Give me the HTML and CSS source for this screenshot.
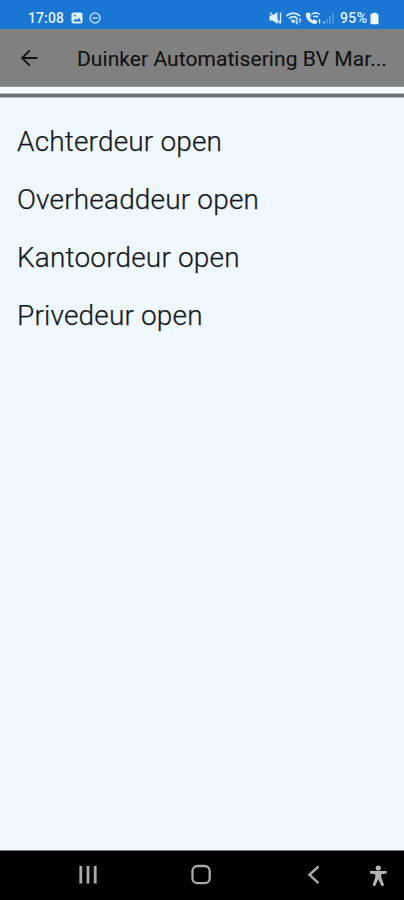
FILE: index.html
```html
<!DOCTYPE html>
<html lang="nl">
<head>
<meta charset="utf-8">
<title>Duinker Automatisering</title>
<link rel="stylesheet" href="styles.css">
</head>
<body>
<div class="phone">
  <div class="status">
    <span class="time">17:08</span>
    <svg class="pic" width="12" height="12" viewBox="0 0 12 12"><rect x=".5" y=".5" width="11" height="11" rx="2" fill="#e3f2fd"/><path d="M2 9.500l2.500-3 1.600 1.500L8 5.500l2.200 4z" fill="#1976d2"/><circle cx="4" cy="3.500" r="1" fill="#1976d2"/></svg>
    <svg class="dnd" width="12" height="12" viewBox="0 0 12 12" fill="none" stroke="#b9daf8" stroke-width="1.400"><circle cx="6" cy="6" r="5"/><path d="M3.200 6h5.600"/></svg>
    <span class="grow"></span>
    <svg class="icons" width="68" height="16" viewBox="0 0 68 16" fill="none" stroke="#d5eafc" stroke-width="1.400">
      <path d="M0.500 5.500h3L8.500 2v12l-5-3.500h-3z" fill="#e3f2fd" stroke="none"/>
      <path d="M1 2.500l10.500 11M11.500 2.500v11"/>
      <path d="M17.500 6c4-3.800 9.500-3.800 13.500 0M20 8.600c3-2.500 6-2.500 8.500 0" stroke-width="1.800"/>
      <path d="M21.500 10.500q2.500-2 5 0L24.300 13.500z" fill="#d5eafc" stroke="none"/>
      <path d="M28 9v4.500l-1.500-1.500M31 13V9l1.200 1.200" stroke-width="1.200"/>
      <path d="M37 3c-1 5 3.500 11 10 11l1.500-3-3.500-1.700-1.700 1.200-2.500-3L42 6l-1.500-3.500z" fill="#e3f2fd" stroke="none"/>
      <path d="M42.500 4.500c2.500-2 5.500-2 8 0M44.500 7c1.500-1 3-1 4.500 0" stroke-width="1.600"/>
      <path d="M50.500 9v4.500M55 13.500v-2" stroke-width="1.400"/>
      <path d="M58 13.500V9M61 13.500V6M64 13.500V3" stroke="#5ba0e4" stroke-width="1.400"/>
    </svg>
    <span class="percent">95%</span>
    <svg class="battery" width="9" height="13" viewBox="0 0 9 13"><path d="M2.500.8h4v1h1q1 0 1 1V11q0 1.200-1.200 1.200H1.700Q.5 12.200.5 11V2.800q0-1 1-1h1z" fill="#eef7ff"/></svg>
  </div>
  <header class="bar">
    <svg class="back" width="18" height="18" viewBox="0 0 18 18" fill="none" stroke="#111" stroke-width="1.800"><path d="M16.500 9H1.500M8.800 1.300L1.100 9l7.700 7.700"/></svg>
    <h1 class="title">Duinker Automatisering BV Mar...</h1>
  </header>
  <div class="divider"></div>
  <ul class="doors">
    <li class="door">Achterdeur open</li>
    <li class="door">Overheaddeur open</li>
    <li class="door">Kantoordeur open</li>
    <li class="door">Privedeur open</li>
  </ul>
  <nav class="nav">
    <svg width="404" height="49" viewBox="0 0 404 49" fill="none" stroke="#aaa">
      <path d="M80.800 15v17.500M88 15v17.500M95.200 15v17.500" stroke-width="2.800"/>
      <rect x="192.500" y="15" width="17.200" height="17.200" rx="5" stroke-width="2.300"/>
      <path d="M318.500 15.500l-9 8.300 9 8.300" stroke-width="2.500"/>
      <circle cx="378.300" cy="17" r="2.600" fill="#b5b5b5" stroke="none"/>
      <path d="M370 20h16.600v2.500l-5.300.8v3l2.800 8-2.500.9-3.300-7-3.300 7-2.500-.9 2.800-8v-3l-5.300-.8z" fill="#b5b5b5" stroke="none"/>
    </svg>
  </nav>
</div>
</body>
</html>
```
FILE: styles.css
```css
* { box-sizing: border-box; }
body { margin: 0; font-family: Roboto, sans-serif; }
.phone {
  width: 404px;
  height: 900px;
  display: flex;
  flex-direction: column;
  background: #eff7ff;
  overflow: hidden;
}
.status {
  height: 29px;
  flex: none;
  display: flex;
  align-items: center;
  padding: 7px 25px 0 28px;
  background: #1976d2;
  color: #e3f2fd;
  font-size: 14px;
  font-weight: 500;
}
.time { width: 37px; letter-spacing: .1px; }
.pic { margin-left: 6px; }
.dnd { margin-left: 6px; }
.grow { flex: 1; }
.icons { margin-right: 3px; }
.percent { width: 29px; letter-spacing: .4px; }
.battery { margin-left: 1px; }
.bar {
  height: 58px;
  flex: none;
  display: flex;
  align-items: center;
  padding: 1px 0 0 21px;
  background: #808080;
  border-bottom: 1px solid #a0a3a4;
}
.title {
  margin: 2px 0 0 38px;
  color: #111;
  font-size: 21px;
  font-weight: 400;
  line-height: 28px;
  letter-spacing: .06px;
  white-space: nowrap;
  -webkit-text-stroke: .1px #111;
}
.divider {
  height: 11px;
  flex: none;
  background: linear-gradient(#f7fcfe 0 6px, #b5bbbd 6px 7px, #697174 7px 10px, #b5bdc0 10px 11px);
}
.doors { flex: 1; margin: 0; padding: 15px 17px; list-style: none; }
.door {
  height: 58px;
  color: #17191c;
  font-size: 28px;
  font-weight: 300;
  line-height: 58px;
  letter-spacing: .16px;
  white-space: nowrap;
  -webkit-text-stroke: .25px #17191c;
}
.nav {
  height: 50px;
  flex: none;
  background: #000;
  border-top: 1px solid #777b7b;
}
.nav svg { display: block; }
```
